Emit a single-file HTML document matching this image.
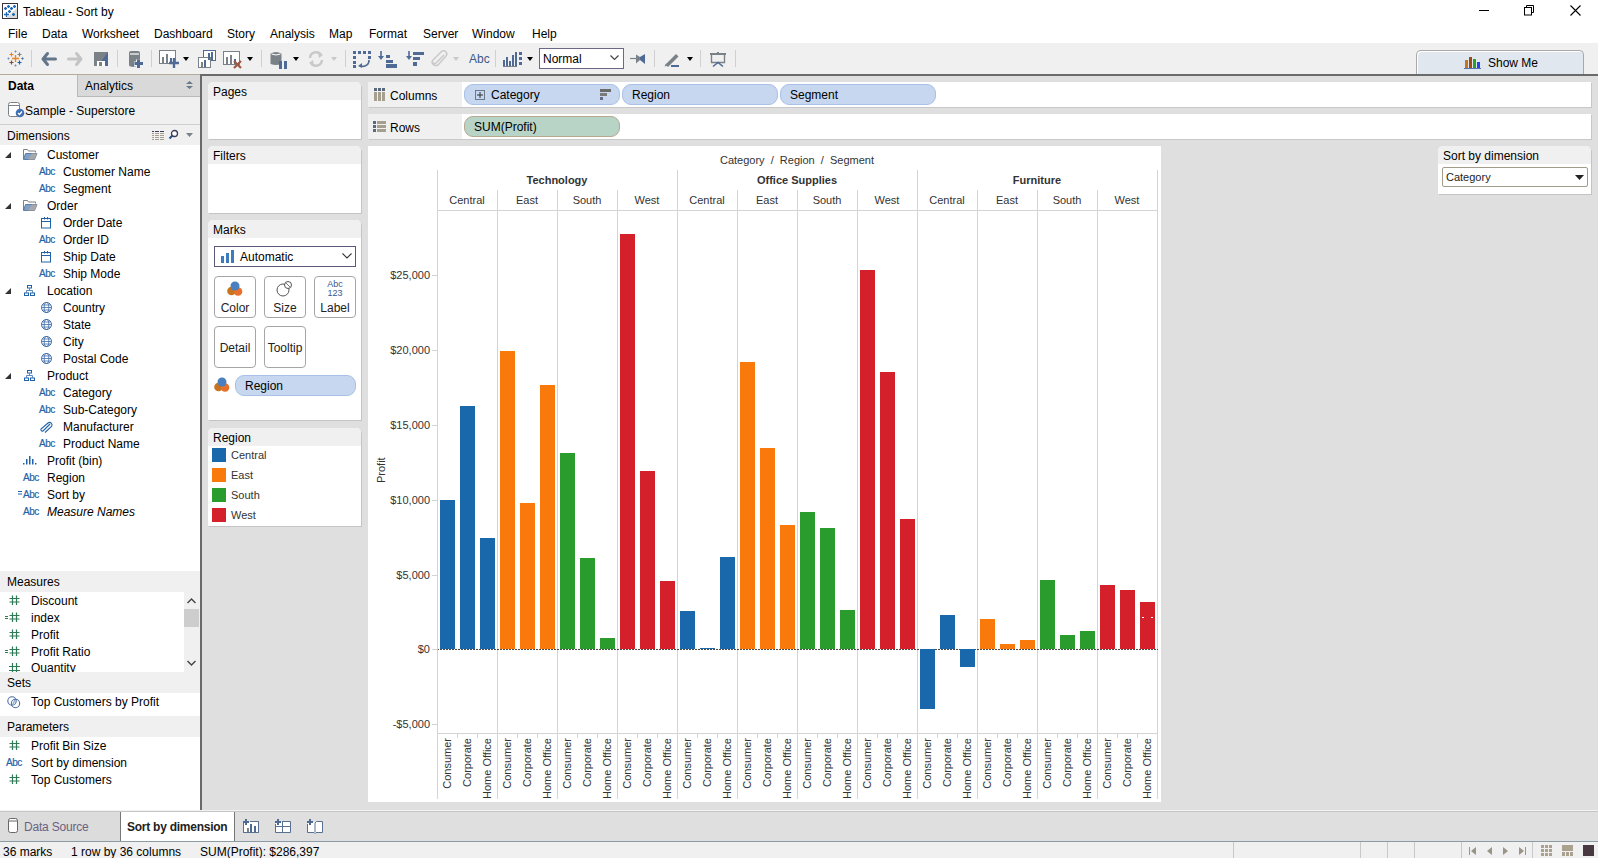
<!DOCTYPE html><html><head><meta charset="utf-8"><style>
html,body{margin:0;padding:0;}
body{width:1598px;height:858px;overflow:hidden;position:relative;background:#fff;font-family:"Liberation Sans", sans-serif;}
.t{position:absolute;white-space:pre;line-height:1;}
.b{position:absolute;box-sizing:border-box;}
svg{position:absolute;overflow:visible;}

</style></head><body>
<svg style="left:2px;top:3px" width="16" height="16" viewBox="0 0 16 16"><rect x="0.5" y="0.5" width="15" height="15" fill="#fff" stroke="#3a3438"/><path d="M15 5L4 15H15Z" fill="#dcdcdc"/><g stroke="#1f68b8" stroke-width="1.3"><path d="M3.5 4V7M2 5.5H5M6.5 2V5M5 3.5H8M9.5 4V7M8 5.5H11M12.5 2V5M11 3.5H14M7.5 7V10M6 8.5H9M11.5 10V13M10 11.5H13"/><path d="M4.5 9V14M2 11.5H7"/></g></svg>
<div class="t" style="left:23px;top:6px;font-size:12px;color:#000;font-weight:normal;">Tableau - Sort by</div>
<div class="b" style="left:1479px;top:10px;width:10px;height:1px;background:#000"></div>
<svg style="left:1524px;top:5px" width="11" height="11"><rect x="0.5" y="2.5" width="7" height="7.5" fill="none" stroke="#000"/><path d="M2.5 2.5V0.5H9.5V7.5H7.5" fill="none" stroke="#000"/></svg>
<svg style="left:1570px;top:5px" width="11" height="11"><path d="M0.5 0.5L10.5 10.5M10.5 0.5L0.5 10.5" stroke="#000" stroke-width="1.1"/></svg>
<div class="t" style="left:8px;top:28px;font-size:12px;color:#000;font-weight:normal;">File</div>
<div class="t" style="left:42px;top:28px;font-size:12px;color:#000;font-weight:normal;">Data</div>
<div class="t" style="left:82px;top:28px;font-size:12px;color:#000;font-weight:normal;">Worksheet</div>
<div class="t" style="left:154px;top:28px;font-size:12px;color:#000;font-weight:normal;">Dashboard</div>
<div class="t" style="left:227px;top:28px;font-size:12px;color:#000;font-weight:normal;">Story</div>
<div class="t" style="left:270px;top:28px;font-size:12px;color:#000;font-weight:normal;">Analysis</div>
<div class="t" style="left:329px;top:28px;font-size:12px;color:#000;font-weight:normal;">Map</div>
<div class="t" style="left:369px;top:28px;font-size:12px;color:#000;font-weight:normal;">Format</div>
<div class="t" style="left:423px;top:28px;font-size:12px;color:#000;font-weight:normal;">Server</div>
<div class="t" style="left:472px;top:28px;font-size:12px;color:#000;font-weight:normal;">Window</div>
<div class="t" style="left:532px;top:28px;font-size:12px;color:#000;font-weight:normal;">Help</div>
<div class="b" style="left:0px;top:43px;width:1598px;height:31px;background:#f0f0f0"></div>
<div class="b" style="left:0px;top:74px;width:200px;height:1px;background:#b5ab9a"></div>
<div class="b" style="left:200px;top:74px;width:1398px;height:2px;background:#6a6a6a"></div>
<div class="b" style="left:31px;top:50px;width:1px;height:17px;background:#d0d0d0"></div>
<div class="b" style="left:117px;top:50px;width:1px;height:17px;background:#d0d0d0"></div>
<div class="b" style="left:151px;top:50px;width:1px;height:17px;background:#d0d0d0"></div>
<div class="b" style="left:261px;top:50px;width:1px;height:17px;background:#d0d0d0"></div>
<div class="b" style="left:345px;top:50px;width:1px;height:17px;background:#d0d0d0"></div>
<div class="b" style="left:495px;top:50px;width:1px;height:17px;background:#d0d0d0"></div>
<div class="b" style="left:654px;top:50px;width:1px;height:17px;background:#d0d0d0"></div>
<div class="b" style="left:700px;top:50px;width:1px;height:17px;background:#d0d0d0"></div>
<div class="b" style="left:735px;top:50px;width:1px;height:17px;background:#d0d0d0"></div>
<svg style="left:4px;top:47px" width="24" height="24" viewBox="0 0 24 24"><g stroke-linecap="butt"><path d="M11.5 8V15M8 11.5H15" stroke="#e8852b" stroke-width="1.4"/><path d="M7.5 5.5V9.5M5.5 7.5H9.5" stroke="#e8852b" stroke-width="1.2"/><path d="M15.5 5.5V9.5M13.5 7.5H17.5" stroke="#7a8288" stroke-width="1.2"/><path d="M7.5 13.5V17.5M5.5 15.5H9.5" stroke="#7f4f45" stroke-width="1.2"/><path d="M15.5 13.5V17.5M13.5 15.5H17.5" stroke="#1f62a8" stroke-width="1.2"/><path d="M11.5 3.5V5.5M10.5 4.5H12.5M11.5 17.5V19.5M10.5 18.5H12.5M4.5 10.5V12.5M3.5 11.5H5.5" stroke="#6a90c0" stroke-width="1.2"/><path d="M18.5 10.5V12.5M17.5 11.5H19.5" stroke="#3a5a90" stroke-width="1.2"/></g></svg>
<svg style="left:41px;top:52px" width="16" height="14" viewBox="0 0 16 14"><path d="M6.5 1.5L2 7L6.5 12.5M3 7H14.5" fill="none" stroke="#62768a" stroke-width="3" stroke-linecap="round" stroke-linejoin="round"/></svg>
<svg style="left:67px;top:52px" width="16" height="14" viewBox="0 0 16 14"><path d="M9.5 1.5L14 7L9.5 12.5M13 7H1.5" fill="none" stroke="#c4c4c4" stroke-width="3" stroke-linecap="round" stroke-linejoin="round"/></svg>
<svg style="left:94px;top:52px" width="14" height="14"><rect x="0" y="0" width="14" height="14" fill="#7a8288"/><path d="M14 0V14H4Z" fill="#4f6a95"/><rect x="3" y="9" width="8" height="5" fill="#fff"/><rect x="5" y="10" width="3" height="4" fill="#7a8288"/></svg>
<svg style="left:128px;top:50px" width="17" height="19"><path d="M1 2.5Q1 1 3 1H10Q12 1 12 2.5V15Q12 16.5 10 16.5H3Q1 16.5 1 15Z" fill="#7a8288"/><path d="M12 2L12 11L3 16.5H10Q12 16.5 12 15Z" fill="#4f6a95"/><path d="M2 4H11" stroke="#fff" stroke-width="1.2"/><path d="M8 9.5H13V11.5H15V16.5H13V18.5H8V16.5H6V11.5H8Z" fill="#f0f0f0"/><path d="M10.5 9.5V18M6.5 13.5H15" stroke="#4f6a95" stroke-width="3"/></svg>
<svg style="left:159px;top:50px" width="22" height="19"><rect x="0.5" y="0.5" width="16" height="13" fill="#fff" stroke="#7a8288"/><rect x="3" y="7" width="2" height="6" fill="#7a8288"/><rect x="7" y="4" width="2" height="9" fill="#7a8288"/><rect x="11" y="8" width="2" height="5" fill="#4f6a95"/><path d="M15 8v10M10 13h10" stroke="#4f6a95" stroke-width="2.4"/></svg>
<svg style="left:183px;top:57px" width="6" height="4"><path d="M0 0H6L3 4Z" fill="#000"/></svg>
<svg style="left:198px;top:50px" width="19" height="19"><rect x="5.5" y="0.5" width="12" height="10" fill="#fff" stroke="#4f6a95"/><rect x="0.5" y="7.5" width="12" height="10" fill="#fff" stroke="#7a8288"/><rect x="3" y="12" width="2" height="5" fill="#7a8288"/><rect x="6" y="10" width="2" height="7" fill="#4f6a95"/><rect x="10" y="3" width="2" height="7" fill="#4f6a95"/><rect x="13" y="2" width="2" height="8" fill="#4f6a95"/></svg>
<svg style="left:223px;top:51px" width="19" height="18"><rect x="0.5" y="0.5" width="16" height="13" fill="#fff" stroke="#7a8288"/><rect x="3" y="6" width="2" height="7" fill="#7a8288"/><rect x="7" y="4" width="2" height="9" fill="#7a8288"/><rect x="11" y="8" width="2" height="5" fill="#4f6a95"/><path d="M11 10l7 7M18 10l-7 7" stroke="#9c5a45" stroke-width="2.2"/></svg>
<svg style="left:247px;top:57px" width="6" height="4"><path d="M0 0H6L3 4Z" fill="#000"/></svg>
<svg style="left:270px;top:51px" width="18" height="19"><path d="M0.5 2.5Q6 -0.5 11.5 2.5V13Q6 15 0.5 13Z" fill="#7a8288"/><path d="M1.5 3Q6 5 10.5 3" fill="none" stroke="#fff"/><rect x="9" y="10" width="3" height="8" fill="#4f6a95"/><rect x="14" y="10" width="3" height="8" fill="#4f6a95"/></svg>
<svg style="left:293px;top:57px" width="6" height="4"><path d="M0 0H6L3 4Z" fill="#000"/></svg>
<svg style="left:308px;top:51px" width="16" height="16"><path d="M2 7A6 6 0 0 1 13 4M14 9A6 6 0 0 1 3 12" fill="none" stroke="#c9c9c9" stroke-width="2.4"/><path d="M10 1L15 4L11 7Z M6 15L1 12L5 9Z" fill="#c9c9c9"/></svg>
<svg style="left:331px;top:57px" width="6" height="4"><path d="M0 0H6L3 4Z" fill="#c9c9c9"/></svg>
<svg style="left:353px;top:51px" width="19" height="17"><g fill="#4f6a95"><rect x="0" y="0" width="3" height="3"/><rect x="5" y="0" width="3" height="3"/><rect x="10" y="0" width="3" height="3"/><rect x="15" y="0" width="3" height="3"/><rect x="0" y="5" width="3" height="3"/><rect x="0" y="10" width="3" height="3"/><rect x="0" y="14" width="3" height="3"/><rect x="15" y="5" width="3" height="3"/></g><path d="M16 9A6 6 0 0 1 8 15" fill="none" stroke="#4f6a95" stroke-width="1.6"/><path d="M5 15L9 12V17Z" fill="#4f6a95"/></svg>
<svg style="left:378px;top:51px" width="20" height="17"><path d="M3 0V7" stroke="#4f6a95" stroke-width="1.6"/><path d="M0 5H6L3 9Z" fill="#4f6a95"/><rect x="8" y="4" width="4" height="3" fill="#4f6a95"/><rect x="8" y="9" width="7" height="3" fill="#4f6a95"/><rect x="8" y="13" width="11" height="4" fill="#4f6a95"/></svg>
<svg style="left:406px;top:51px" width="19" height="17"><path d="M3 0V7" stroke="#4f6a95" stroke-width="1.6"/><path d="M0 5H6L3 9Z" fill="#4f6a95"/><rect x="7" y="1" width="11" height="3" fill="#4f6a95"/><rect x="7" y="6" width="7" height="3" fill="#4f6a95"/><rect x="7" y="11" width="4" height="4" fill="#4f6a95"/></svg>
<svg style="left:431px;top:51px" width="17" height="17"><path d="M13 4L5 12A2 2 0 0 1 2 9L10 1A3 3 0 0 1 15 5L7 14A4 4 0 0 1 1 10" fill="none" stroke="#c9c9c9" stroke-width="1.5"/></svg>
<svg style="left:453px;top:57px" width="6" height="4"><path d="M0 0H6L3 4Z" fill="#c9c9c9"/></svg>
<div class="t" style="left:469px;top:53px;font-size:12px;color:#3d5a88;font-weight:normal;">Abc</div>
<svg style="left:503px;top:52px" width="20" height="15"><g fill="#4f6a95"><rect x="0" y="8" width="2" height="7"/><rect x="3" y="5" width="2" height="10"/><rect x="6" y="9" width="2" height="6"/><rect x="9" y="3" width="2" height="12"/><rect x="12" y="0" width="2" height="15" fill="#4f6a95"/><rect x="16" y="0" width="3" height="3"/><rect x="16" y="5" width="3" height="3"/><rect x="16" y="10" width="3" height="3"/></g><rect x="0" y="14" width="14" height="1" fill="#7a8288"/></svg>
<svg style="left:527px;top:57px" width="6" height="4"><path d="M0 0H6L3 4Z" fill="#000"/></svg>
<div class="b" style="left:539px;top:48px;width:85px;height:21px;background:#fff;border:1px solid #6e6886"></div>
<div class="t" style="left:543px;top:53px;font-size:12px;color:#000;font-weight:normal;">Normal</div>
<svg style="left:610px;top:55px" width="9" height="6"><path d="M0.5 0.5L4.5 4.5L8.5 0.5" fill="none" stroke="#444" stroke-width="1.2"/></svg>
<svg style="left:630px;top:54px" width="16" height="10"><path d="M0 4.5H6" stroke="#7a8288" stroke-width="1.2"/><path d="M6 0.5V9.5L10 6V3Z" fill="#7a8288"/><path d="M10 3L15 0V10L10 6Z" fill="#4f6a95"/></svg>
<svg style="left:664px;top:52px" width="16" height="15"><path d="M1.5 12.5L12 2L14.5 4.5L4 15Z" fill="#7a8288"/><path d="M0.5 14.5L2 11.5L4 13.5Z" fill="#7a8288"/><rect x="7" y="13" width="8" height="2" fill="#4f6a95"/></svg>
<svg style="left:687px;top:57px" width="6" height="4"><path d="M0 0H6L3 4Z" fill="#000"/></svg>
<svg style="left:710px;top:52px" width="16" height="15"><rect x="0" y="1" width="16" height="2" fill="#7a8288"/><rect x="7" y="0" width="2" height="2" fill="#7a8288"/><path d="M1.5 3V10.5H14.5V3" fill="none" stroke="#7a8288" stroke-width="1.4"/><path d="M3 14.5L8 10.5L13 14.5" fill="none" stroke="#4f6a95" stroke-width="1.6"/></svg>
<div class="b" style="left:1416px;top:50px;width:168px;height:24px;background:#e1e7ef;border:1px solid #a8a8a8;border-bottom:none;border-radius:5px 5px 0 0;box-shadow:inset 1px 1px 0 #fff"></div>
<svg style="left:1464px;top:56px" width="17" height="13"><rect x="1" y="4" width="3" height="8" fill="#c8741f"/><rect x="5" y="1" width="3" height="11" fill="#9a4a12"/><rect x="9" y="3" width="3" height="9" fill="#2aa02a"/><rect x="13" y="6" width="3" height="6" fill="#2a40f0"/><rect x="0" y="12" width="17" height="1" fill="#5a70b0"/></svg>
<div class="t" style="left:1488px;top:57px;font-size:12px;color:#000;font-weight:normal;">Show Me</div>
<div class="b" style="left:0px;top:75px;width:200px;height:735px;background:#f0f0f0"></div>
<div class="b" style="left:77px;top:75px;width:123px;height:22px;background:#d9d9d9;border-left:1px solid #b8b8b8;border-bottom:1px solid #b8b8b8"></div>
<div class="t" style="left:8px;top:80px;font-size:12px;color:#000;font-weight:bold;">Data</div>
<div class="t" style="left:85px;top:80px;font-size:12px;color:#000;font-weight:normal;">Analytics</div>
<svg style="left:186px;top:81px" width="8" height="8"><path d="M0 3H7L3.5 0Z M0 5H7L3.5 8Z" fill="#6a7a8a"/></svg>
<svg style="left:8px;top:102px" width="17" height="16"><rect x="0.5" y="0.5" width="11" height="14" rx="2" fill="#fff" stroke="#7a8288"/><path d="M1 3.5H11" stroke="#7a8288"/><circle cx="12" cy="11" r="4.3" fill="#3f70b5"/><path d="M10 11L11.5 12.5L14 9.5" fill="none" stroke="#fff" stroke-width="1.2"/></svg>
<div class="t" style="left:25px;top:105px;font-size:12px;color:#000;font-weight:normal;">Sample - Superstore</div>
<div class="b" style="left:0px;top:124px;width:200px;height:1px;background:#cfcfcf"></div>
<div class="t" style="left:7px;top:130px;font-size:12px;color:#000;font-weight:normal;">Dimensions</div>
<svg style="left:152px;top:131px" width="13" height="10"><g fill="#a69e8e"><rect x="0" y="2" width="2" height="1"/><rect x="3" y="2" width="4" height="1"/><rect x="8" y="2" width="4" height="1"/><rect x="0" y="4" width="2" height="1"/><rect x="3" y="4" width="4" height="1"/><rect x="8" y="4" width="4" height="1"/><rect x="0" y="6" width="2" height="1"/><rect x="3" y="6" width="4" height="1"/><rect x="8" y="6" width="4" height="1"/><rect x="0" y="8" width="2" height="1"/><rect x="3" y="8" width="4" height="1"/><rect x="8" y="8" width="4" height="1"/></g><g fill="#3a3a5a"><rect x="0" y="0" width="2" height="1"/><rect x="3" y="0" width="4" height="1"/><rect x="8" y="0" width="4" height="1"/></g></svg>
<svg style="left:168px;top:129px" width="11" height="11"><circle cx="6.5" cy="4.5" r="3" fill="#fff" stroke="#3a3a5a" stroke-width="1.3"/><path d="M4.5 6.5L1.5 9.5" stroke="#2a4a80" stroke-width="2"/></svg>
<svg style="left:186px;top:133px" width="8" height="5"><path d="M0 0H7L3.5 4Z" fill="#7a8288"/></svg>
<div class="b" style="left:0px;top:145px;width:200px;height:426px;background:#fff"></div>
<svg style="left:5px;top:152px" width="6" height="6"><path d="M6 0V6H0Z" fill="#333"/></svg>
<svg style="left:23px;top:149px" width="15" height="11"><path d="M0.5 10V0.5H4.5L5.5 2H12.5V3.5" fill="none" stroke="#7a8288"/><path d="M2.5 4.5H14L11.5 10.5H0.5Z" fill="#7fa0c8" stroke="#4f6a95" stroke-width="0.8"/><path d="M9 4.5H14L11.5 10.5H5Z" fill="#a8a8a8"/></svg>
<div class="t" style="left:47px;top:149px;font-size:12px;color:#000;font-weight:normal;">Customer</div>
<div class="t" style="left:39px;top:167px;font-size:10px;letter-spacing:-0.45px;-webkit-text-stroke:0.2px #1f62a8;color:#1f62a8;">Abc</div>
<div class="t" style="left:63px;top:166px;font-size:12px;color:#000;font-weight:normal;">Customer Name</div>
<div class="t" style="left:39px;top:184px;font-size:10px;letter-spacing:-0.45px;-webkit-text-stroke:0.2px #1f62a8;color:#1f62a8;">Abc</div>
<div class="t" style="left:63px;top:183px;font-size:12px;color:#000;font-weight:normal;">Segment</div>
<svg style="left:5px;top:203px" width="6" height="6"><path d="M6 0V6H0Z" fill="#333"/></svg>
<svg style="left:23px;top:200px" width="15" height="11"><path d="M0.5 10V0.5H4.5L5.5 2H12.5V3.5" fill="none" stroke="#7a8288"/><path d="M2.5 4.5H14L11.5 10.5H0.5Z" fill="#7fa0c8" stroke="#4f6a95" stroke-width="0.8"/><path d="M9 4.5H14L11.5 10.5H5Z" fill="#a8a8a8"/></svg>
<div class="t" style="left:47px;top:200px;font-size:12px;color:#000;font-weight:normal;">Order</div>
<svg style="left:41px;top:217px" width="11" height="12"><rect x="0.5" y="1.5" width="9" height="9.5" fill="none" stroke="#1f62a8"/><path d="M0.5 4.5H9.5M3.5 0V2.5M6.5 0V2.5" stroke="#1f62a8"/></svg>
<div class="t" style="left:63px;top:217px;font-size:12px;color:#000;font-weight:normal;">Order Date</div>
<div class="t" style="left:39px;top:235px;font-size:10px;letter-spacing:-0.45px;-webkit-text-stroke:0.2px #1f62a8;color:#1f62a8;">Abc</div>
<div class="t" style="left:63px;top:234px;font-size:12px;color:#000;font-weight:normal;">Order ID</div>
<svg style="left:41px;top:251px" width="11" height="12"><rect x="0.5" y="1.5" width="9" height="9.5" fill="none" stroke="#1f62a8"/><path d="M0.5 4.5H9.5M3.5 0V2.5M6.5 0V2.5" stroke="#1f62a8"/></svg>
<div class="t" style="left:63px;top:251px;font-size:12px;color:#000;font-weight:normal;">Ship Date</div>
<div class="t" style="left:39px;top:269px;font-size:10px;letter-spacing:-0.45px;-webkit-text-stroke:0.2px #1f62a8;color:#1f62a8;">Abc</div>
<div class="t" style="left:63px;top:268px;font-size:12px;color:#000;font-weight:normal;">Ship Mode</div>
<svg style="left:5px;top:288px" width="6" height="6"><path d="M6 0V6H0Z" fill="#333"/></svg>
<svg style="left:24px;top:285px" width="12" height="12"><rect x="3.5" y="0.5" width="4" height="2.5" fill="none" stroke="#1f62a8"/><rect x="0.5" y="8" width="4" height="2.5" fill="none" stroke="#1f62a8"/><rect x="6.5" y="8" width="4" height="2.5" fill="none" stroke="#1f62a8"/><path d="M5.5 3V5.5M2.5 5.5H8.5M2.5 5.5V8M8.5 5.5V8" fill="none" stroke="#5a8ac0"/></svg>
<div class="t" style="left:47px;top:285px;font-size:12px;color:#000;font-weight:normal;">Location</div>
<svg style="left:41px;top:302px" width="12" height="12"><circle cx="5.5" cy="5.5" r="5" fill="none" stroke="#3a6aa8"/><ellipse cx="5.5" cy="5.5" rx="2.3" ry="5" fill="none" stroke="#3a6aa8" stroke-width="0.8"/><path d="M0.5 5.5H10.5M1.5 3H9.5M1.5 8H9.5" stroke="#3a6aa8" stroke-width="0.8"/></svg>
<div class="t" style="left:63px;top:302px;font-size:12px;color:#000;font-weight:normal;">Country</div>
<svg style="left:41px;top:319px" width="12" height="12"><circle cx="5.5" cy="5.5" r="5" fill="none" stroke="#3a6aa8"/><ellipse cx="5.5" cy="5.5" rx="2.3" ry="5" fill="none" stroke="#3a6aa8" stroke-width="0.8"/><path d="M0.5 5.5H10.5M1.5 3H9.5M1.5 8H9.5" stroke="#3a6aa8" stroke-width="0.8"/></svg>
<div class="t" style="left:63px;top:319px;font-size:12px;color:#000;font-weight:normal;">State</div>
<svg style="left:41px;top:336px" width="12" height="12"><circle cx="5.5" cy="5.5" r="5" fill="none" stroke="#3a6aa8"/><ellipse cx="5.5" cy="5.5" rx="2.3" ry="5" fill="none" stroke="#3a6aa8" stroke-width="0.8"/><path d="M0.5 5.5H10.5M1.5 3H9.5M1.5 8H9.5" stroke="#3a6aa8" stroke-width="0.8"/></svg>
<div class="t" style="left:63px;top:336px;font-size:12px;color:#000;font-weight:normal;">City</div>
<svg style="left:41px;top:353px" width="12" height="12"><circle cx="5.5" cy="5.5" r="5" fill="none" stroke="#3a6aa8"/><ellipse cx="5.5" cy="5.5" rx="2.3" ry="5" fill="none" stroke="#3a6aa8" stroke-width="0.8"/><path d="M0.5 5.5H10.5M1.5 3H9.5M1.5 8H9.5" stroke="#3a6aa8" stroke-width="0.8"/></svg>
<div class="t" style="left:63px;top:353px;font-size:12px;color:#000;font-weight:normal;">Postal Code</div>
<svg style="left:5px;top:373px" width="6" height="6"><path d="M6 0V6H0Z" fill="#333"/></svg>
<svg style="left:24px;top:370px" width="12" height="12"><rect x="3.5" y="0.5" width="4" height="2.5" fill="none" stroke="#1f62a8"/><rect x="0.5" y="8" width="4" height="2.5" fill="none" stroke="#1f62a8"/><rect x="6.5" y="8" width="4" height="2.5" fill="none" stroke="#1f62a8"/><path d="M5.5 3V5.5M2.5 5.5H8.5M2.5 5.5V8M8.5 5.5V8" fill="none" stroke="#5a8ac0"/></svg>
<div class="t" style="left:47px;top:370px;font-size:12px;color:#000;font-weight:normal;">Product</div>
<div class="t" style="left:39px;top:388px;font-size:10px;letter-spacing:-0.45px;-webkit-text-stroke:0.2px #1f62a8;color:#1f62a8;">Abc</div>
<div class="t" style="left:63px;top:387px;font-size:12px;color:#000;font-weight:normal;">Category</div>
<div class="t" style="left:39px;top:405px;font-size:10px;letter-spacing:-0.45px;-webkit-text-stroke:0.2px #1f62a8;color:#1f62a8;">Abc</div>
<div class="t" style="left:63px;top:404px;font-size:12px;color:#000;font-weight:normal;">Sub-Category</div>
<svg style="left:39px;top:422px" width="14" height="11"><path d="M11 2L4 9A1.5 1.5 0 0 1 2 7L9 1A2.5 2.5 0 0 1 12.5 4.5L6 10.5" fill="none" stroke="#1f62a8" stroke-width="1.1"/></svg>
<div class="t" style="left:63px;top:421px;font-size:12px;color:#000;font-weight:normal;">Manufacturer</div>
<div class="t" style="left:39px;top:439px;font-size:10px;letter-spacing:-0.45px;-webkit-text-stroke:0.2px #1f62a8;color:#1f62a8;">Abc</div>
<div class="t" style="left:63px;top:438px;font-size:12px;color:#000;font-weight:normal;">Product Name</div>
<svg style="left:23px;top:456px" width="15" height="10"><g fill="#1f62a8"><rect x="0" y="7" width="1.5" height="1.5"/><rect x="3" y="3" width="1.5" height="5.5"/><rect x="6" y="0" width="1.5" height="8.5"/><rect x="9" y="3" width="1.5" height="5.5"/><rect x="12" y="7" width="1.5" height="1.5"/></g></svg>
<div class="t" style="left:47px;top:455px;font-size:12px;color:#000;font-weight:normal;">Profit (bin)</div>
<div class="t" style="left:23px;top:473px;font-size:10px;letter-spacing:-0.45px;-webkit-text-stroke:0.2px #1f62a8;color:#1f62a8;">Abc</div>
<div class="t" style="left:47px;top:472px;font-size:12px;color:#000;font-weight:normal;">Region</div>
<svg style="left:18px;top:491px" width="5" height="4"><path d="M0 0.5H4M0 3H4" stroke="#1f62a8"/></svg>
<div class="t" style="left:23px;top:490px;font-size:10px;letter-spacing:-0.45px;-webkit-text-stroke:0.2px #1f62a8;color:#1f62a8;">Abc</div>
<div class="t" style="left:47px;top:489px;font-size:12px;color:#000;font-weight:normal;">Sort by</div>
<div class="t" style="left:23px;top:507px;font-size:10px;letter-spacing:-0.45px;-webkit-text-stroke:0.2px #1f62a8;color:#1f62a8;">Abc</div>
<div class="t" style="left:47px;top:506px;font-size:12px;color:#000;font-weight:normal;font-style:italic;">Measure Names</div>
<div class="t" style="left:7px;top:576px;font-size:12px;color:#000;font-weight:normal;">Measures</div>
<div class="b" style="left:0px;top:592px;width:184px;height:80px;background:#fff"></div>
<div class="b" style="left:184px;top:592px;width:16px;height:80px;background:#f0f0f0"></div>
<div class="b" style="left:184px;top:609px;width:15px;height:18px;background:#cdcdcd"></div>
<svg style="left:187px;top:598px" width="9" height="6"><path d="M0.5 5L4.5 1L8.5 5" fill="none" stroke="#444" stroke-width="1.4"/></svg>
<svg style="left:187px;top:660px" width="9" height="6"><path d="M0.5 1L4.5 5L8.5 1" fill="none" stroke="#444" stroke-width="1.4"/></svg>
<svg style="left:9px;top:595px" width="12" height="11"><path d="M3.5 0.5V10M7.5 0.5V10M0.5 3.5H10.5M0.5 7H10.5" stroke="#2e7a55" stroke-width="1.2"/></svg>
<div class="t" style="left:31px;top:595px;font-size:12px;color:#000;font-weight:normal;">Discount</div>
<svg style="left:9px;top:612px" width="12" height="11"><path d="M3.5 0.5V10M7.5 0.5V10M0.5 3.5H10.5M0.5 7H10.5" stroke="#2e7a55" stroke-width="1.2"/><path d="M-4 4.5H-1M-4 6.5H-1" stroke="#2e7a55" stroke-width="1"/></svg>
<div class="t" style="left:31px;top:612px;font-size:12px;color:#000;font-weight:normal;">index</div>
<svg style="left:9px;top:629px" width="12" height="11"><path d="M3.5 0.5V10M7.5 0.5V10M0.5 3.5H10.5M0.5 7H10.5" stroke="#2e7a55" stroke-width="1.2"/></svg>
<div class="t" style="left:31px;top:629px;font-size:12px;color:#000;font-weight:normal;">Profit</div>
<svg style="left:9px;top:646px" width="12" height="11"><path d="M3.5 0.5V10M7.5 0.5V10M0.5 3.5H10.5M0.5 7H10.5" stroke="#2e7a55" stroke-width="1.2"/><path d="M-4 4.5H-1M-4 6.5H-1" stroke="#2e7a55" stroke-width="1"/></svg>
<div class="t" style="left:31px;top:646px;font-size:12px;color:#000;font-weight:normal;">Profit Ratio</div>
<div class="b" style="left:0;top:660px;width:184px;height:12px;overflow:hidden">
<svg style="left:9px;top:3px" width="12" height="11"><path d="M3.5 0V11M7.5 0V11M0 3.5H11M0 7.5H11" stroke="#2e7a55" stroke-width="1.2"/></svg>
<div class="t" style="left:31px;top:2px;font-size:12px;color:#000">Quantity</div>
</div>
<div class="t" style="left:7px;top:677px;font-size:12px;color:#000;font-weight:normal;">Sets</div>
<div class="b" style="left:0px;top:693px;width:200px;height:23px;background:#fff"></div>
<svg style="left:7px;top:696px" width="15" height="13"><circle cx="5" cy="5" r="4.2" fill="none" stroke="#4a6fa8" stroke-width="1.1"/><circle cx="8.5" cy="7.5" r="4.2" fill="none" stroke="#4a6fa8" stroke-width="1.1"/><path d="M5.5 9L8 4" stroke="#8aaad0" stroke-width="1.2"/></svg>
<div class="t" style="left:31px;top:696px;font-size:12px;color:#000;font-weight:normal;">Top Customers by Profit</div>
<div class="t" style="left:7px;top:721px;font-size:12px;color:#000;font-weight:normal;">Parameters</div>
<div class="b" style="left:0px;top:737px;width:200px;height:73px;background:#fff"></div>
<svg style="left:9px;top:740px" width="12" height="11"><path d="M3.5 0.5V10M7.5 0.5V10M0.5 3.5H10.5M0.5 7H10.5" stroke="#2e7a55" stroke-width="1.2"/></svg>
<div class="t" style="left:31px;top:740px;font-size:12px;color:#000;font-weight:normal;">Profit Bin Size</div>
<div class="t" style="left:6px;top:758px;font-size:10px;letter-spacing:-0.45px;-webkit-text-stroke:0.2px #1f62a8;color:#1f62a8;">Abc</div>
<div class="t" style="left:31px;top:757px;font-size:12px;color:#000;font-weight:normal;">Sort by dimension</div>
<svg style="left:9px;top:774px" width="12" height="11"><path d="M3.5 0.5V10M7.5 0.5V10M0.5 3.5H10.5M0.5 7H10.5" stroke="#2e7a55" stroke-width="1.2"/></svg>
<div class="t" style="left:31px;top:774px;font-size:12px;color:#000;font-weight:normal;">Top Customers</div>
<div class="b" style="left:200px;top:75px;width:2px;height:735px;background:#6a6a6a"></div>
<div class="b" style="left:202px;top:76px;width:1396px;height:734px;background:#dfdfdf"></div>
<div class="b" style="left:209px;top:83px;width:153px;height:57px;background:#c4c4c4;border-radius:5px 5px 0 0"></div>
<div class="b" style="left:208px;top:82px;width:153px;height:57px;background:#fff;border-radius:5px 5px 0 0;overflow:hidden"></div>
<div class="b" style="left:208px;top:82px;width:153px;height:18px;background:#f0f0f0;border-radius:5px 5px 0 0"></div>
<div class="t" style="left:213px;top:86px;font-size:12px;color:#000;font-weight:normal;">Pages</div>
<div class="b" style="left:209px;top:147px;width:153px;height:67px;background:#c4c4c4;border-radius:5px 5px 0 0"></div>
<div class="b" style="left:208px;top:146px;width:153px;height:67px;background:#fff;border-radius:5px 5px 0 0;overflow:hidden"></div>
<div class="b" style="left:208px;top:146px;width:153px;height:18px;background:#f0f0f0;border-radius:5px 5px 0 0"></div>
<div class="t" style="left:213px;top:150px;font-size:12px;color:#000;font-weight:normal;">Filters</div>
<div class="b" style="left:209px;top:221px;width:153px;height:200px;background:#c4c4c4;border-radius:5px 5px 0 0"></div>
<div class="b" style="left:208px;top:220px;width:153px;height:200px;background:#fff;border-radius:5px 5px 0 0;overflow:hidden"></div>
<div class="b" style="left:208px;top:220px;width:153px;height:18px;background:#f0f0f0;border-radius:5px 5px 0 0"></div>
<div class="t" style="left:213px;top:224px;font-size:12px;color:#000;font-weight:normal;">Marks</div>
<div class="b" style="left:214px;top:246px;width:142px;height:21px;background:#fff;border:1px solid #5a5a78"></div>
<svg style="left:221px;top:250px" width="14" height="13"><rect x="0" y="6" width="3" height="7" fill="#3d7bc0"/><rect x="5" y="3" width="3" height="10" fill="#3d7bc0"/><rect x="10" y="0" width="3" height="13" fill="#3d7bc0"/></svg>
<div class="t" style="left:240px;top:251px;font-size:12px;color:#000;font-weight:normal;">Automatic</div>
<svg style="left:342px;top:253px" width="10" height="6"><path d="M0.5 0.5L5 5L9.5 0.5" fill="none" stroke="#333" stroke-width="1.1"/></svg>
<div class="b" style="left:214px;top:276px;width:42px;height:42px;background:#fff;border:1px solid #a6a6a6;border-radius:4px"></div>
<div class="t" style="left:214px;top:302px;width:42px;text-align:center;font-size:12px;color:#222">Color</div>
<div class="b" style="left:264px;top:276px;width:42px;height:42px;background:#fff;border:1px solid #a6a6a6;border-radius:4px"></div>
<div class="t" style="left:264px;top:302px;width:42px;text-align:center;font-size:12px;color:#222">Size</div>
<div class="b" style="left:314px;top:276px;width:42px;height:42px;background:#fff;border:1px solid #a6a6a6;border-radius:4px"></div>
<div class="t" style="left:314px;top:302px;width:42px;text-align:center;font-size:12px;color:#222">Label</div>
<div class="b" style="left:214px;top:326px;width:42px;height:42px;background:#fff;border:1px solid #a6a6a6;border-radius:4px"></div>
<div class="t" style="left:214px;top:342px;width:42px;text-align:center;font-size:12px;color:#222">Detail</div>
<div class="b" style="left:264px;top:326px;width:42px;height:42px;background:#fff;border:1px solid #a6a6a6;border-radius:4px"></div>
<div class="t" style="left:264px;top:342px;width:42px;text-align:center;font-size:12px;color:#222">Tooltip</div>
<svg style="left:227px;top:281px" width="16" height="15"><circle cx="4.5" cy="10" r="4.3" fill="#c8741f"/><circle cx="11" cy="10.5" r="4.3" fill="#e8702a"/><circle cx="8" cy="5" r="4.5" fill="#4a7fc0"/></svg>
<svg style="left:276px;top:281px" width="17" height="16"><circle cx="7" cy="9" r="6" fill="none" stroke="#555" stroke-width="1"/><circle cx="12" cy="4" r="3.5" fill="#fff" stroke="#555" stroke-width="1"/><path d="M10 2L14 6" stroke="#555" stroke-width="0.8"/></svg>
<div class="t" style="left:314px;top:280px;width:42px;text-align:center;font-size:9px;line-height:9px;color:#3a5a90">Abc<br>123</div>
<svg style="left:214px;top:377px" width="16" height="15"><circle cx="4.5" cy="10" r="4.3" fill="#c8741f"/><circle cx="11" cy="10.5" r="4.3" fill="#e8702a"/><circle cx="8" cy="5" r="4.5" fill="#4a7fc0"/></svg>
<div class="b" style="left:235px;top:375px;width:121px;height:21px;background:#c6d7ef;border:1px solid #a9c1e6;border-radius:9px"></div>
<div class="t" style="left:245px;top:380px;font-size:12px;color:#000;font-weight:normal;">Region</div>
<div class="b" style="left:209px;top:429px;width:153px;height:98px;background:#c4c4c4;border-radius:5px 5px 0 0"></div>
<div class="b" style="left:208px;top:428px;width:153px;height:98px;background:#fff;border-radius:5px 5px 0 0;overflow:hidden"></div>
<div class="b" style="left:208px;top:428px;width:153px;height:18px;background:#f0f0f0;border-radius:5px 5px 0 0"></div>
<div class="t" style="left:213px;top:432px;font-size:12px;color:#000;font-weight:normal;">Region</div>
<div class="b" style="left:212px;top:448px;width:14px;height:14px;background:#1a68ac"></div>
<div class="t" style="left:231px;top:450px;font-size:11px;color:#333;font-weight:normal;">Central</div>
<div class="b" style="left:212px;top:468px;width:14px;height:14px;background:#f97a0b"></div>
<div class="t" style="left:231px;top:470px;font-size:11px;color:#333;font-weight:normal;">East</div>
<div class="b" style="left:212px;top:488px;width:14px;height:14px;background:#2a9c2d"></div>
<div class="t" style="left:231px;top:490px;font-size:11px;color:#333;font-weight:normal;">South</div>
<div class="b" style="left:212px;top:508px;width:14px;height:14px;background:#d3202a"></div>
<div class="t" style="left:231px;top:510px;font-size:11px;color:#333;font-weight:normal;">West</div>
<div class="b" style="left:369px;top:83px;width:1223px;height:25px;background:#c8c8c8"></div>
<div class="b" style="left:368px;top:82px;width:1223px;height:25px;background:#fff"></div>
<div class="b" style="left:368px;top:82px;width:94px;height:25px;background:#f0f0f0"></div>
<svg style="left:374px;top:88px" width="12" height="14"><g fill="#a69e8e"><rect x="0" y="4" width="3" height="9"/><rect x="4" y="4" width="3" height="9"/><rect x="8" y="4" width="3" height="9"/></g><g fill="#5a6a7a"><rect x="0" y="0" width="3" height="3"/><rect x="4" y="0" width="3" height="3"/><rect x="8" y="0" width="3" height="3"/></g></svg>
<div class="t" style="left:390px;top:90px;font-size:12px;color:#000;font-weight:normal;">Columns</div>
<div class="b" style="left:369px;top:115px;width:1223px;height:25px;background:#c8c8c8"></div>
<div class="b" style="left:368px;top:114px;width:1223px;height:25px;background:#fff"></div>
<div class="b" style="left:368px;top:114px;width:94px;height:25px;background:#f0f0f0"></div>
<svg style="left:373px;top:121px" width="14" height="12"><g fill="#a69e8e"><rect x="4" y="0" width="9" height="3"/><rect x="4" y="4" width="9" height="3"/><rect x="4" y="8" width="9" height="3"/></g><g fill="#5a6a7a"><rect x="0" y="0" width="3" height="3"/><rect x="0" y="4" width="3" height="3"/><rect x="0" y="8" width="3" height="3"/></g></svg>
<div class="t" style="left:390px;top:122px;font-size:12px;color:#000;font-weight:normal;">Rows</div>
<div class="b" style="left:464px;top:84px;width:156px;height:21px;background:#c6d7ef;border:1px solid #a9c1e6;border-radius:9px"></div>
<svg style="left:475px;top:90px" width="10" height="10"><rect x="0.5" y="0.5" width="9" height="9" fill="none" stroke="#6a7a8a"/><path d="M5 2V8M2 5H8" stroke="#333"/></svg>
<div class="t" style="left:491px;top:89px;font-size:12px;color:#000;font-weight:normal;">Category</div>
<svg style="left:600px;top:89px" width="11" height="11"><rect x="0" y="0" width="11" height="3" fill="#6a6a6a"/><rect x="0" y="4" width="7" height="3" fill="#7a7a7a"/><rect x="0" y="8" width="3" height="3" fill="#6a6a8a"/></svg>
<div class="b" style="left:622px;top:84px;width:156px;height:21px;background:#c6d7ef;border:1px solid #a9c1e6;border-radius:9px"></div>
<div class="t" style="left:632px;top:89px;font-size:12px;color:#000;font-weight:normal;">Region</div>
<div class="b" style="left:780px;top:84px;width:156px;height:21px;background:#c6d7ef;border:1px solid #a9c1e6;border-radius:9px"></div>
<div class="t" style="left:790px;top:89px;font-size:12px;color:#000;font-weight:normal;">Segment</div>
<div class="b" style="left:464px;top:116px;width:156px;height:21px;background:#b8d4c6;border:1px solid #b8a890;border-radius:9px"></div>
<div class="t" style="left:474px;top:121px;font-size:12px;color:#000;font-weight:normal;">SUM(Profit)</div>
<div class="b" style="left:1439px;top:147px;width:153px;height:48px;background:#c4c4c4;border-radius:5px 5px 0 0"></div>
<div class="b" style="left:1438px;top:146px;width:153px;height:48px;background:#fff;border-radius:5px 5px 0 0"></div>
<div class="b" style="left:1438px;top:146px;width:153px;height:18px;background:#f0f0f0;border-radius:5px 5px 0 0"></div>
<div class="t" style="left:1443px;top:150px;font-size:12px;color:#000;font-weight:normal;">Sort by dimension</div>
<div class="b" style="left:1442px;top:167px;width:146px;height:20px;background:#fff;border:1px solid #a49c8a;border-radius:2px"></div>
<div class="t" style="left:1446px;top:172px;font-size:11px;color:#222;font-weight:normal;">Category</div>
<svg style="left:1575px;top:175px" width="9" height="5"><path d="M0 0H9L4.5 5Z" fill="#222"/></svg>
<div class="b" style="left:368px;top:146px;width:793px;height:656px;background:#fff"></div>
<div class="t" style="left:368px;top:155px;width:858px;text-align:center;font-size:11px;color:#333">Category  /  Region  /  Segment</div>
<div class="t" style="left:437px;top:175px;width:240px;text-align:center;font-size:11px;font-weight:bold;color:#333">Technology</div>
<div class="t" style="left:437px;top:195px;width:60px;text-align:center;font-size:11px;color:#333">Central</div>
<div class="t" style="left:497px;top:195px;width:60px;text-align:center;font-size:11px;color:#333">East</div>
<div class="t" style="left:557px;top:195px;width:60px;text-align:center;font-size:11px;color:#333">South</div>
<div class="t" style="left:617px;top:195px;width:60px;text-align:center;font-size:11px;color:#333">West</div>
<div class="t" style="left:677px;top:175px;width:240px;text-align:center;font-size:11px;font-weight:bold;color:#333">Office Supplies</div>
<div class="t" style="left:677px;top:195px;width:60px;text-align:center;font-size:11px;color:#333">Central</div>
<div class="t" style="left:737px;top:195px;width:60px;text-align:center;font-size:11px;color:#333">East</div>
<div class="t" style="left:797px;top:195px;width:60px;text-align:center;font-size:11px;color:#333">South</div>
<div class="t" style="left:857px;top:195px;width:60px;text-align:center;font-size:11px;color:#333">West</div>
<div class="t" style="left:917px;top:175px;width:240px;text-align:center;font-size:11px;font-weight:bold;color:#333">Furniture</div>
<div class="t" style="left:917px;top:195px;width:60px;text-align:center;font-size:11px;color:#333">Central</div>
<div class="t" style="left:977px;top:195px;width:60px;text-align:center;font-size:11px;color:#333">East</div>
<div class="t" style="left:1037px;top:195px;width:60px;text-align:center;font-size:11px;color:#333">South</div>
<div class="t" style="left:1097px;top:195px;width:60px;text-align:center;font-size:11px;color:#333">West</div>
<div class="b" style="left:437px;top:170px;width:1px;height:629px;background:#d4d4d4"></div>
<div class="b" style="left:497px;top:190px;width:1px;height:609px;background:#d4d4d4"></div>
<div class="b" style="left:557px;top:190px;width:1px;height:609px;background:#d4d4d4"></div>
<div class="b" style="left:617px;top:190px;width:1px;height:609px;background:#d4d4d4"></div>
<div class="b" style="left:677px;top:170px;width:1px;height:629px;background:#d4d4d4"></div>
<div class="b" style="left:737px;top:190px;width:1px;height:609px;background:#d4d4d4"></div>
<div class="b" style="left:797px;top:190px;width:1px;height:609px;background:#d4d4d4"></div>
<div class="b" style="left:857px;top:190px;width:1px;height:609px;background:#d4d4d4"></div>
<div class="b" style="left:917px;top:170px;width:1px;height:629px;background:#d4d4d4"></div>
<div class="b" style="left:977px;top:190px;width:1px;height:609px;background:#d4d4d4"></div>
<div class="b" style="left:1037px;top:190px;width:1px;height:609px;background:#d4d4d4"></div>
<div class="b" style="left:1097px;top:190px;width:1px;height:609px;background:#d4d4d4"></div>
<div class="b" style="left:1157px;top:170px;width:1px;height:629px;background:#d4d4d4"></div>
<div class="b" style="left:438px;top:210px;width:720px;height:1px;background:#d4d4d4"></div>
<div class="b" style="left:437px;top:733px;width:721px;height:1px;background:#d4d4d4"></div>
<div class="b" style="left:457px;top:733px;width:1px;height:5px;background:#d4d4d4"></div>
<div class="b" style="left:477px;top:733px;width:1px;height:5px;background:#d4d4d4"></div>
<div class="b" style="left:517px;top:733px;width:1px;height:5px;background:#d4d4d4"></div>
<div class="b" style="left:537px;top:733px;width:1px;height:5px;background:#d4d4d4"></div>
<div class="b" style="left:577px;top:733px;width:1px;height:5px;background:#d4d4d4"></div>
<div class="b" style="left:597px;top:733px;width:1px;height:5px;background:#d4d4d4"></div>
<div class="b" style="left:637px;top:733px;width:1px;height:5px;background:#d4d4d4"></div>
<div class="b" style="left:657px;top:733px;width:1px;height:5px;background:#d4d4d4"></div>
<div class="b" style="left:697px;top:733px;width:1px;height:5px;background:#d4d4d4"></div>
<div class="b" style="left:717px;top:733px;width:1px;height:5px;background:#d4d4d4"></div>
<div class="b" style="left:757px;top:733px;width:1px;height:5px;background:#d4d4d4"></div>
<div class="b" style="left:777px;top:733px;width:1px;height:5px;background:#d4d4d4"></div>
<div class="b" style="left:817px;top:733px;width:1px;height:5px;background:#d4d4d4"></div>
<div class="b" style="left:837px;top:733px;width:1px;height:5px;background:#d4d4d4"></div>
<div class="b" style="left:877px;top:733px;width:1px;height:5px;background:#d4d4d4"></div>
<div class="b" style="left:897px;top:733px;width:1px;height:5px;background:#d4d4d4"></div>
<div class="b" style="left:937px;top:733px;width:1px;height:5px;background:#d4d4d4"></div>
<div class="b" style="left:957px;top:733px;width:1px;height:5px;background:#d4d4d4"></div>
<div class="b" style="left:997px;top:733px;width:1px;height:5px;background:#d4d4d4"></div>
<div class="b" style="left:1017px;top:733px;width:1px;height:5px;background:#d4d4d4"></div>
<div class="b" style="left:1057px;top:733px;width:1px;height:5px;background:#d4d4d4"></div>
<div class="b" style="left:1077px;top:733px;width:1px;height:5px;background:#d4d4d4"></div>
<div class="b" style="left:1117px;top:733px;width:1px;height:5px;background:#d4d4d4"></div>
<div class="b" style="left:1137px;top:733px;width:1px;height:5px;background:#d4d4d4"></div>
<div class="b" style="left:432px;top:275px;width:5px;height:1px;background:#d4d4d4"></div>
<div class="t" style="left:330px;top:270px;width:100px;text-align:right;font-size:11px;color:#333">$25,000</div>
<div class="b" style="left:432px;top:350px;width:5px;height:1px;background:#d4d4d4"></div>
<div class="t" style="left:330px;top:345px;width:100px;text-align:right;font-size:11px;color:#333">$20,000</div>
<div class="b" style="left:432px;top:425px;width:5px;height:1px;background:#d4d4d4"></div>
<div class="t" style="left:330px;top:420px;width:100px;text-align:right;font-size:11px;color:#333">$15,000</div>
<div class="b" style="left:432px;top:500px;width:5px;height:1px;background:#d4d4d4"></div>
<div class="t" style="left:330px;top:495px;width:100px;text-align:right;font-size:11px;color:#333">$10,000</div>
<div class="b" style="left:432px;top:575px;width:5px;height:1px;background:#d4d4d4"></div>
<div class="t" style="left:330px;top:570px;width:100px;text-align:right;font-size:11px;color:#333">$5,000</div>
<div class="b" style="left:432px;top:649px;width:5px;height:1px;background:#d4d4d4"></div>
<div class="t" style="left:330px;top:644px;width:100px;text-align:right;font-size:11px;color:#333">$0</div>
<div class="b" style="left:432px;top:724px;width:5px;height:1px;background:#d4d4d4"></div>
<div class="t" style="left:330px;top:719px;width:100px;text-align:right;font-size:11px;color:#333">-$5,000</div>
<div class="t" style="left:376px;top:483px;font-size:11px;color:#333;transform:rotate(-90deg);transform-origin:0 0">Profit</div>
<div class="b" style="left:440px;top:500px;width:15px;height:149px;background:#1a68ac"></div>
<div class="b" style="left:460px;top:406px;width:15px;height:243px;background:#1a68ac"></div>
<div class="b" style="left:480px;top:538px;width:15px;height:111px;background:#1a68ac"></div>
<div class="b" style="left:500px;top:351px;width:15px;height:298px;background:#f97a0b"></div>
<div class="b" style="left:520px;top:503px;width:15px;height:146px;background:#f97a0b"></div>
<div class="b" style="left:540px;top:385px;width:15px;height:264px;background:#f97a0b"></div>
<div class="b" style="left:560px;top:453px;width:15px;height:196px;background:#2a9c2d"></div>
<div class="b" style="left:580px;top:558px;width:15px;height:91px;background:#2a9c2d"></div>
<div class="b" style="left:600px;top:638px;width:15px;height:11px;background:#2a9c2d"></div>
<div class="b" style="left:620px;top:234px;width:15px;height:415px;background:#d3202a"></div>
<div class="b" style="left:640px;top:471px;width:15px;height:178px;background:#d3202a"></div>
<div class="b" style="left:660px;top:581px;width:15px;height:68px;background:#d3202a"></div>
<div class="b" style="left:680px;top:611px;width:15px;height:38px;background:#1a68ac"></div>
<div class="b" style="left:700px;top:648px;width:15px;height:1px;background:#1a68ac"></div>
<div class="b" style="left:720px;top:557px;width:15px;height:92px;background:#1a68ac"></div>
<div class="b" style="left:740px;top:362px;width:15px;height:287px;background:#f97a0b"></div>
<div class="b" style="left:760px;top:448px;width:15px;height:201px;background:#f97a0b"></div>
<div class="b" style="left:780px;top:525px;width:15px;height:124px;background:#f97a0b"></div>
<div class="b" style="left:800px;top:512px;width:15px;height:137px;background:#2a9c2d"></div>
<div class="b" style="left:820px;top:528px;width:15px;height:121px;background:#2a9c2d"></div>
<div class="b" style="left:840px;top:610px;width:15px;height:39px;background:#2a9c2d"></div>
<div class="b" style="left:860px;top:270px;width:15px;height:379px;background:#d3202a"></div>
<div class="b" style="left:880px;top:372px;width:15px;height:277px;background:#d3202a"></div>
<div class="b" style="left:900px;top:519px;width:15px;height:130px;background:#d3202a"></div>
<div class="b" style="left:940px;top:615px;width:15px;height:34px;background:#1a68ac"></div>
<div class="b" style="left:980px;top:619px;width:15px;height:30px;background:#f97a0b"></div>
<div class="b" style="left:1000px;top:644px;width:15px;height:5px;background:#f97a0b"></div>
<div class="b" style="left:1020px;top:640px;width:15px;height:9px;background:#f97a0b"></div>
<div class="b" style="left:1040px;top:580px;width:15px;height:69px;background:#2a9c2d"></div>
<div class="b" style="left:1060px;top:635px;width:15px;height:14px;background:#2a9c2d"></div>
<div class="b" style="left:1080px;top:631px;width:15px;height:18px;background:#2a9c2d"></div>
<div class="b" style="left:1100px;top:585px;width:15px;height:64px;background:#d3202a"></div>
<div class="b" style="left:1120px;top:590px;width:15px;height:59px;background:#d3202a"></div>
<div class="b" style="left:1140px;top:602px;width:15px;height:47px;background:#d3202a"></div>
<svg style="left:438px;top:649px" width="720" height="1"><line x1="0" y1="0.5" x2="720" y2="0.5" stroke="#4e4a48" stroke-dasharray="2 1" stroke-dashoffset="1"/></svg>
<div class="b" style="left:920px;top:649px;width:15px;height:60px;background:#1a68ac"></div>
<div class="b" style="left:960px;top:649px;width:15px;height:18px;background:#1a68ac"></div>
<div class="b" style="left:1142px;top:617px;width:2px;height:1px;background:#fff"></div>
<div class="b" style="left:1151px;top:617px;width:2px;height:1px;background:#fff"></div>
<div class="t" style="left:441px;top:738px;width:0;height:0;"><div style="position:absolute;right:0;top:0;transform:rotate(-90deg);transform-origin:100% 0;font-size:11px;color:#333;white-space:pre;line-height:12px">Consumer</div></div>
<div class="t" style="left:461px;top:738px;width:0;height:0;"><div style="position:absolute;right:0;top:0;transform:rotate(-90deg);transform-origin:100% 0;font-size:11px;color:#333;white-space:pre;line-height:12px">Corporate</div></div>
<div class="t" style="left:481px;top:738px;width:0;height:0;"><div style="position:absolute;right:0;top:0;transform:rotate(-90deg);transform-origin:100% 0;font-size:11px;color:#333;white-space:pre;line-height:12px">Home Office</div></div>
<div class="t" style="left:501px;top:738px;width:0;height:0;"><div style="position:absolute;right:0;top:0;transform:rotate(-90deg);transform-origin:100% 0;font-size:11px;color:#333;white-space:pre;line-height:12px">Consumer</div></div>
<div class="t" style="left:521px;top:738px;width:0;height:0;"><div style="position:absolute;right:0;top:0;transform:rotate(-90deg);transform-origin:100% 0;font-size:11px;color:#333;white-space:pre;line-height:12px">Corporate</div></div>
<div class="t" style="left:541px;top:738px;width:0;height:0;"><div style="position:absolute;right:0;top:0;transform:rotate(-90deg);transform-origin:100% 0;font-size:11px;color:#333;white-space:pre;line-height:12px">Home Office</div></div>
<div class="t" style="left:561px;top:738px;width:0;height:0;"><div style="position:absolute;right:0;top:0;transform:rotate(-90deg);transform-origin:100% 0;font-size:11px;color:#333;white-space:pre;line-height:12px">Consumer</div></div>
<div class="t" style="left:581px;top:738px;width:0;height:0;"><div style="position:absolute;right:0;top:0;transform:rotate(-90deg);transform-origin:100% 0;font-size:11px;color:#333;white-space:pre;line-height:12px">Corporate</div></div>
<div class="t" style="left:601px;top:738px;width:0;height:0;"><div style="position:absolute;right:0;top:0;transform:rotate(-90deg);transform-origin:100% 0;font-size:11px;color:#333;white-space:pre;line-height:12px">Home Office</div></div>
<div class="t" style="left:621px;top:738px;width:0;height:0;"><div style="position:absolute;right:0;top:0;transform:rotate(-90deg);transform-origin:100% 0;font-size:11px;color:#333;white-space:pre;line-height:12px">Consumer</div></div>
<div class="t" style="left:641px;top:738px;width:0;height:0;"><div style="position:absolute;right:0;top:0;transform:rotate(-90deg);transform-origin:100% 0;font-size:11px;color:#333;white-space:pre;line-height:12px">Corporate</div></div>
<div class="t" style="left:661px;top:738px;width:0;height:0;"><div style="position:absolute;right:0;top:0;transform:rotate(-90deg);transform-origin:100% 0;font-size:11px;color:#333;white-space:pre;line-height:12px">Home Office</div></div>
<div class="t" style="left:681px;top:738px;width:0;height:0;"><div style="position:absolute;right:0;top:0;transform:rotate(-90deg);transform-origin:100% 0;font-size:11px;color:#333;white-space:pre;line-height:12px">Consumer</div></div>
<div class="t" style="left:701px;top:738px;width:0;height:0;"><div style="position:absolute;right:0;top:0;transform:rotate(-90deg);transform-origin:100% 0;font-size:11px;color:#333;white-space:pre;line-height:12px">Corporate</div></div>
<div class="t" style="left:721px;top:738px;width:0;height:0;"><div style="position:absolute;right:0;top:0;transform:rotate(-90deg);transform-origin:100% 0;font-size:11px;color:#333;white-space:pre;line-height:12px">Home Office</div></div>
<div class="t" style="left:741px;top:738px;width:0;height:0;"><div style="position:absolute;right:0;top:0;transform:rotate(-90deg);transform-origin:100% 0;font-size:11px;color:#333;white-space:pre;line-height:12px">Consumer</div></div>
<div class="t" style="left:761px;top:738px;width:0;height:0;"><div style="position:absolute;right:0;top:0;transform:rotate(-90deg);transform-origin:100% 0;font-size:11px;color:#333;white-space:pre;line-height:12px">Corporate</div></div>
<div class="t" style="left:781px;top:738px;width:0;height:0;"><div style="position:absolute;right:0;top:0;transform:rotate(-90deg);transform-origin:100% 0;font-size:11px;color:#333;white-space:pre;line-height:12px">Home Office</div></div>
<div class="t" style="left:801px;top:738px;width:0;height:0;"><div style="position:absolute;right:0;top:0;transform:rotate(-90deg);transform-origin:100% 0;font-size:11px;color:#333;white-space:pre;line-height:12px">Consumer</div></div>
<div class="t" style="left:821px;top:738px;width:0;height:0;"><div style="position:absolute;right:0;top:0;transform:rotate(-90deg);transform-origin:100% 0;font-size:11px;color:#333;white-space:pre;line-height:12px">Corporate</div></div>
<div class="t" style="left:841px;top:738px;width:0;height:0;"><div style="position:absolute;right:0;top:0;transform:rotate(-90deg);transform-origin:100% 0;font-size:11px;color:#333;white-space:pre;line-height:12px">Home Office</div></div>
<div class="t" style="left:861px;top:738px;width:0;height:0;"><div style="position:absolute;right:0;top:0;transform:rotate(-90deg);transform-origin:100% 0;font-size:11px;color:#333;white-space:pre;line-height:12px">Consumer</div></div>
<div class="t" style="left:881px;top:738px;width:0;height:0;"><div style="position:absolute;right:0;top:0;transform:rotate(-90deg);transform-origin:100% 0;font-size:11px;color:#333;white-space:pre;line-height:12px">Corporate</div></div>
<div class="t" style="left:901px;top:738px;width:0;height:0;"><div style="position:absolute;right:0;top:0;transform:rotate(-90deg);transform-origin:100% 0;font-size:11px;color:#333;white-space:pre;line-height:12px">Home Office</div></div>
<div class="t" style="left:921px;top:738px;width:0;height:0;"><div style="position:absolute;right:0;top:0;transform:rotate(-90deg);transform-origin:100% 0;font-size:11px;color:#333;white-space:pre;line-height:12px">Consumer</div></div>
<div class="t" style="left:941px;top:738px;width:0;height:0;"><div style="position:absolute;right:0;top:0;transform:rotate(-90deg);transform-origin:100% 0;font-size:11px;color:#333;white-space:pre;line-height:12px">Corporate</div></div>
<div class="t" style="left:961px;top:738px;width:0;height:0;"><div style="position:absolute;right:0;top:0;transform:rotate(-90deg);transform-origin:100% 0;font-size:11px;color:#333;white-space:pre;line-height:12px">Home Office</div></div>
<div class="t" style="left:981px;top:738px;width:0;height:0;"><div style="position:absolute;right:0;top:0;transform:rotate(-90deg);transform-origin:100% 0;font-size:11px;color:#333;white-space:pre;line-height:12px">Consumer</div></div>
<div class="t" style="left:1001px;top:738px;width:0;height:0;"><div style="position:absolute;right:0;top:0;transform:rotate(-90deg);transform-origin:100% 0;font-size:11px;color:#333;white-space:pre;line-height:12px">Corporate</div></div>
<div class="t" style="left:1021px;top:738px;width:0;height:0;"><div style="position:absolute;right:0;top:0;transform:rotate(-90deg);transform-origin:100% 0;font-size:11px;color:#333;white-space:pre;line-height:12px">Home Office</div></div>
<div class="t" style="left:1041px;top:738px;width:0;height:0;"><div style="position:absolute;right:0;top:0;transform:rotate(-90deg);transform-origin:100% 0;font-size:11px;color:#333;white-space:pre;line-height:12px">Consumer</div></div>
<div class="t" style="left:1061px;top:738px;width:0;height:0;"><div style="position:absolute;right:0;top:0;transform:rotate(-90deg);transform-origin:100% 0;font-size:11px;color:#333;white-space:pre;line-height:12px">Corporate</div></div>
<div class="t" style="left:1081px;top:738px;width:0;height:0;"><div style="position:absolute;right:0;top:0;transform:rotate(-90deg);transform-origin:100% 0;font-size:11px;color:#333;white-space:pre;line-height:12px">Home Office</div></div>
<div class="t" style="left:1101px;top:738px;width:0;height:0;"><div style="position:absolute;right:0;top:0;transform:rotate(-90deg);transform-origin:100% 0;font-size:11px;color:#333;white-space:pre;line-height:12px">Consumer</div></div>
<div class="t" style="left:1121px;top:738px;width:0;height:0;"><div style="position:absolute;right:0;top:0;transform:rotate(-90deg);transform-origin:100% 0;font-size:11px;color:#333;white-space:pre;line-height:12px">Corporate</div></div>
<div class="t" style="left:1141px;top:738px;width:0;height:0;"><div style="position:absolute;right:0;top:0;transform:rotate(-90deg);transform-origin:100% 0;font-size:11px;color:#333;white-space:pre;line-height:12px">Home Office</div></div>
<div class="b" style="left:0px;top:810px;width:1598px;height:31px;background:#dfdfdf"></div>
<div class="b" style="left:0px;top:810px;width:1598px;height:1px;background:#f2f2f2"></div>
<div class="b" style="left:0px;top:811px;width:1598px;height:1px;background:#c6c6c6"></div>
<div class="b" style="left:0px;top:812px;width:120px;height:29px;background:#dcdcdc"></div>
<div class="b" style="left:120px;top:812px;width:115px;height:29px;background:#fff;border-left:1px solid #777;border-right:1px solid #777"></div>
<svg style="left:8px;top:818px" width="10" height="16"><rect x="0.5" y="0.5" width="9" height="14" rx="2" fill="#fff" stroke="#666"/><path d="M0.5 3H9.5" stroke="#666"/></svg>
<div class="t" style="left:24px;top:821px;font-size:12px;color:#6a6282;font-weight:normal;letter-spacing:-0.2px;">Data Source</div>
<div class="t" style="left:127px;top:821px;font-size:12px;color:#222;font-weight:bold;letter-spacing:-0.25px;">Sort by dimension</div>
<svg style="left:243px;top:818px" width="16" height="15"><path d="M0.5 14.5V3.5H6M7 3.5H15.5V14.5H0.5" fill="#fff" stroke="#4f6a95"/><rect x="1" y="4" width="14" height="10" fill="#fff"/><path d="M0.5 6V14.5H15.5V3.5H7" fill="none" stroke="#5a7090"/><rect x="4" y="10" width="2" height="4" fill="#7a8288"/><rect x="7" y="6" width="2" height="8" fill="#4f6a95"/><rect x="11" y="8" width="2" height="6" fill="#4f6a95"/><path d="M3 1V7M0 4H6" stroke="#4f6a95" stroke-width="2"/></svg>
<svg style="left:275px;top:818px" width="16" height="15"><rect x="1" y="4" width="14" height="10" fill="#fff"/><path d="M0.5 6V14.5H15.5V3.5H7M7.5 3.5V14.5M0.5 8.5H15.5" fill="none" stroke="#5a7090"/><path d="M3 1V7M0 4H6" stroke="#4f6a95" stroke-width="2"/></svg>
<svg style="left:307px;top:818px" width="16" height="16"><path d="M1 4H7.5L8 5L9 4H15V14H1Z" fill="#fff"/><path d="M0.5 6V14.5H7L8 15.5L9 14.5H15.5V3.5H9.5L8 5V14" fill="none" stroke="#5a7090"/><path d="M3 1V7M0 4H6" stroke="#4f6a95" stroke-width="2"/></svg>
<div class="b" style="left:0px;top:841px;width:1598px;height:17px;background:#f0f0f0;border-top:1px solid #8c9ca4"></div>
<div class="t" style="left:3px;top:846px;font-size:12px;color:#000;font-weight:normal;">36 marks</div>
<div class="t" style="left:71px;top:846px;font-size:12px;color:#000;font-weight:normal;">1 row by 36 columns</div>
<div class="t" style="left:200px;top:846px;font-size:12px;color:#000;font-weight:normal;">SUM(Profit): $286,397</div>
<div class="b" style="left:1233px;top:842px;width:1px;height:16px;background:#c8c8c8"></div>
<div class="b" style="left:1360px;top:842px;width:1px;height:16px;background:#c8c8c8"></div>
<div class="b" style="left:1387px;top:842px;width:1px;height:16px;background:#c8c8c8"></div>
<div class="b" style="left:1414px;top:842px;width:1px;height:16px;background:#c8c8c8"></div>
<div class="b" style="left:1461px;top:842px;width:1px;height:16px;background:#c8c8c8"></div>
<div class="b" style="left:1532px;top:842px;width:1px;height:16px;background:#c8c8c8"></div>
<svg style="left:1469px;top:846px" width="60" height="10"><g fill="#9a9488"><rect x="0" y="1" width="1" height="8"/><path d="M7 1V9L2 5Z"/><path d="M23 1V9L18 5Z"/><path d="M34 1V9L39 5Z"/><path d="M50 1V9L55 5Z"/><rect x="56" y="1" width="1" height="8"/></g></svg>
<svg style="left:1541px;top:845px" width="58" height="12"><g fill="#aaa28e"><rect x="0" y="0" width="3" height="3"/><rect x="4" y="0" width="3" height="3"/><rect x="8" y="0" width="3" height="3"/><rect x="0" y="4" width="3" height="3"/><rect x="4" y="4" width="3" height="3"/><rect x="8" y="4" width="3" height="3"/><rect x="0" y="8" width="3" height="3"/><rect x="4" y="8" width="3" height="3"/><rect x="8" y="8" width="3" height="3"/><rect x="21" y="0" width="11" height="6"/><rect x="21" y="7" width="3" height="4"/><rect x="25" y="7" width="3" height="4"/><rect x="29" y="7" width="3" height="4"/></g><rect x="42" y="0" width="11" height="11" fill="#47393f"/></svg>
</body></html>
